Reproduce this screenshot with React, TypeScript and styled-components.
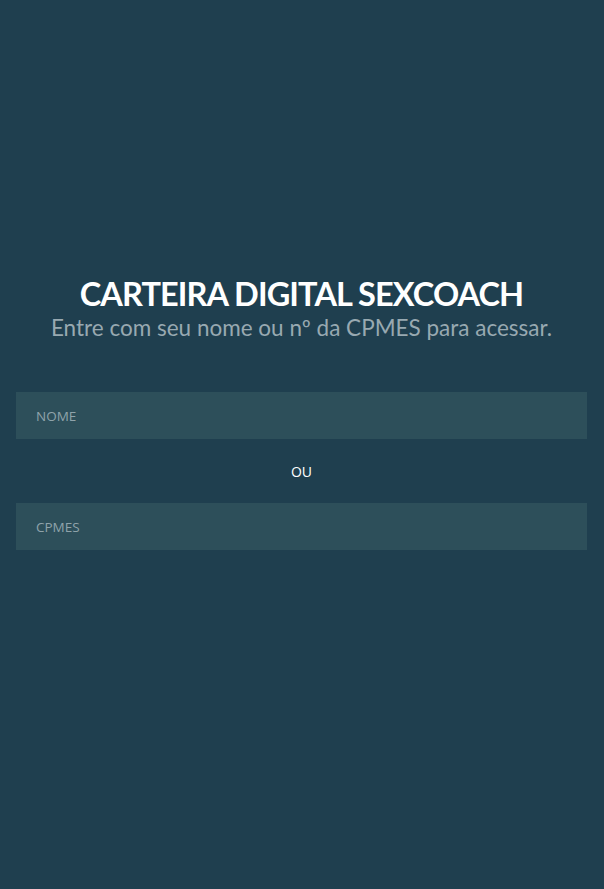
import React from "react";
import styled, { createGlobalStyle } from "styled-components";

const Global = createGlobalStyle`
  html, body { margin: 0; padding: 0; background: #1f3f4f; }
  body { font-family: "Lato", "Liberation Sans", sans-serif; }
  #root { min-height: 889px; }
`;

const Page = styled.main`
  min-height: 889px;
  box-sizing: border-box;
  padding: 274px 17px 0 16px;
  display: flex;
  flex-direction: column;
  align-items: stretch;
`;

const Title = styled.h1`
  margin: 0;
  text-align: center;
  color: #ffffff;
  font-family: "Lato", sans-serif;
  font-weight: 700;
  font-size: 32.5px;
  line-height: 40px;
  letter-spacing: -0.9px;
`;

const Subtitle = styled.p`
  margin: 0;
  text-align: center;
  color: #98a9b1;
  font-family: "Lato", sans-serif;
  font-size: 22.5px;
  line-height: 28px;
`;

const Form = styled.form`
  margin-top: 50px;
  display: flex;
  flex-direction: column;
`;

const Input = styled.input`
  box-sizing: border-box;
  width: 100%;
  height: 47px;
  border: none;
  outline: none;
  background: #2d4f5a;
  padding: 0 20px;
  font-family: "Open Sans", sans-serif;
  font-size: 13.5px;
  color: #ffffff;
  &::placeholder { color: #8fa3aa; text-transform: uppercase; }
`;

const Or = styled.div`
  height: 64px;
  display: flex;
  align-items: center;
  justify-content: center;
  color: #ffffff;
  font-family: "Open Sans", sans-serif;
  font-size: 14px;
`;

export default function App() {
  return (
    <>
      <Global />
      <Page>
        <Title>CARTEIRA DIGITAL SEXCOACH</Title>
        <Subtitle>Entre com seu nome ou nº da CPMES para acessar.</Subtitle>
        <Form onSubmit={(e) => e.preventDefault()}>
          <Input placeholder="NOME" />
          <Or>OU</Or>
          <Input placeholder="CPMES" />
        </Form>
      </Page>
    </>
  );
}
